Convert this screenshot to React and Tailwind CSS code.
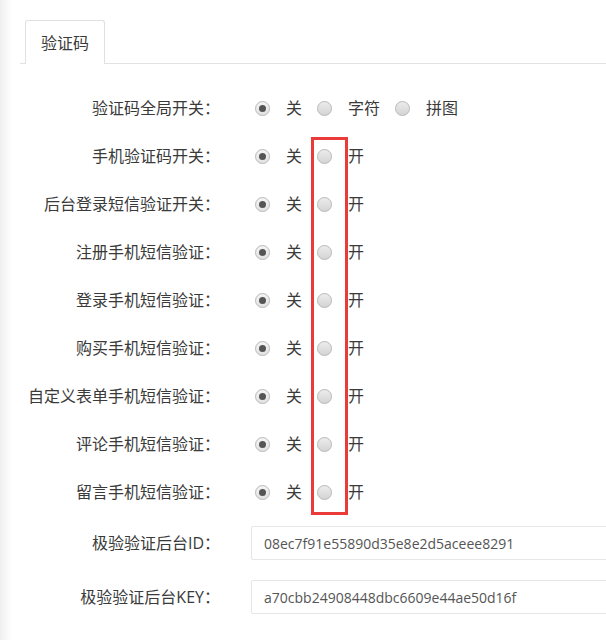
import React from "react";

function Radio({ checked }) {
  return (
    <span
      className={
        "flex h-[15px] w-[15px] shrink-0 items-center justify-center rounded-full border border-[#b8b8b8] " +
        (checked
          ? "bg-gradient-to-b from-[#f4f4f4] to-[#e2e2e2]"
          : "bg-gradient-to-b from-[#ececec] to-[#d4d4d4]")
      }
    >
      {checked && <span className="h-[7px] w-[7px] rounded-full bg-[#555555]" />}
    </span>
  );
}

function Opt({ checked, label, last }) {
  return (
    <div className="flex items-center">
      <Radio checked={checked} />
      <span className={"ml-[16px] text-[16px] leading-none text-[#3a3a3a] " + (last ? "" : "mr-[15px]")}>
        {label}
      </span>
    </div>
  );
}

const rows = [
  { label: "验证码全局开关：", opts: ["关", "字符", "拼图"] },
  { label: "手机验证码开关：", opts: ["关", "开"] },
  { label: "后台登录短信验证开关：", opts: ["关", "开"] },
  { label: "注册手机短信验证：", opts: ["关", "开"] },
  { label: "登录手机短信验证：", opts: ["关", "开"] },
  { label: "购买手机短信验证：", opts: ["关", "开"] },
  { label: "自定义表单手机短信验证：", opts: ["关", "开"] },
  { label: "评论手机短信验证：", opts: ["关", "开"] },
  { label: "留言手机短信验证：", opts: ["关", "开"] },
];

export default function App() {
  return (
    <div className="relative flex min-h-[640px] w-[606px] overflow-hidden bg-white font-['Open_Sans','Noto_Sans_CJK_SC',sans-serif]">
      <div className="w-[12px] shrink-0 bg-gradient-to-r from-[#efefef] to-white" />
      <div className="flex-1">
        <div className="ml-[8px] flex border-b border-[#e2e2e2] pl-[5px] pt-[20px]">
          <div className="-mb-px flex h-[44px] items-center rounded-t-[3px] border border-b-0 border-[#e0e0e0] bg-white px-[15px] text-[16px] leading-none text-[#3a3a3a]">
            验证码
          </div>
        </div>
        <div className="mt-[20px] flex flex-col">
          {rows.map((r, i) => (
            <div key={i} className="flex h-[48px] items-center">
              <div className="w-[208px] text-right text-[16px] leading-none text-[#3a3a3a]">{r.label}</div>
              <div className="ml-[35px] flex items-center">
                {r.opts.map((o, j) => (
                  <Opt key={j} checked={j === 0} label={o} last={j === r.opts.length - 1} />
                ))}
              </div>
            </div>
          ))}
        </div>
        <div className="mt-[10px] flex flex-col gap-[20px]">
          {[
            ["极验验证后台ID：", "08ec7f91e55890d35e8e2d5aceee8291"],
            ["极验验证后台KEY：", "a70cbb24908448dbc6609e44ae50d16f"],
          ].map(([l, v], i) => (
            <div key={i} className="flex h-[34px] items-center">
              <div className="w-[208px] text-right text-[16px] leading-none text-[#3a3a3a]">{l}</div>
              <div className="ml-[31px] flex h-[34px] w-[400px] shrink-0 items-center rounded-[2px] border border-[#e6e6e6] pl-[12px] text-[14px] text-[#555555]">
                {v}
              </div>
            </div>
          ))}
        </div>
      </div>
      <div className="pointer-events-none absolute left-[311px] top-[137px] h-[378px] w-[37px] border-[3px] border-[#ea3a3a]" />
    </div>
  );
}
